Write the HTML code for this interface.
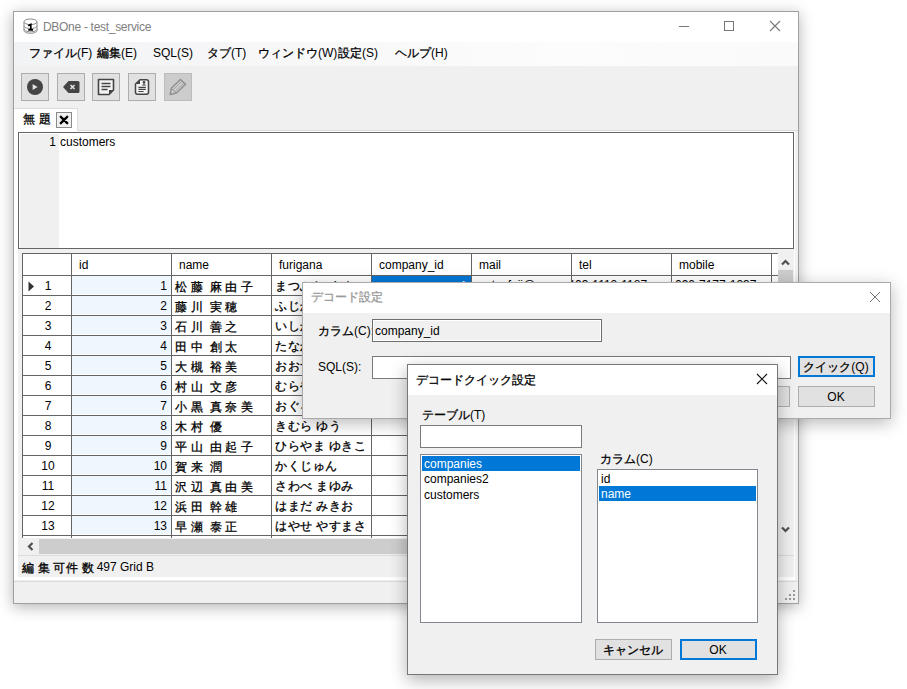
<!DOCTYPE html>
<html><head><meta charset="utf-8"><style>
*{box-sizing:border-box;margin:0;padding:0}
html,body{width:907px;height:689px;overflow:hidden;background:#fff;font-family:"Liberation Sans",sans-serif;font-size:12px;color:#000}
div,svg{position:absolute}
.t{white-space:nowrap;line-height:14px;height:14px}
.j{letter-spacing:3.5px;word-spacing:-3px;position:relative;top:1px}
.k{letter-spacing:0px}
.gl{background:#646464}
.c{-webkit-text-stroke:0.3px currentColor}
</style></head><body>
<div style="left:13px;top:11px;width:786px;height:593px;border:1px solid #a0a0a0;background:#f0f0f0;box-shadow:0 3px 14px rgba(0,0,0,.30)"></div>
<div style="left:14px;top:12px;width:784px;height:30px;background:#fff"></div>
<svg style="left:23px;top:18px" width="15" height="16" viewBox="0 0 15 16">
<g fill="none" stroke="#8a8a8a" stroke-width="1">
<path d="M1 4v8.5c0 1.6 2.9 2.8 6.5 2.8s6.5-1.2 6.5-2.8V4"/>
<ellipse cx="7.5" cy="3.8" rx="6.5" ry="2.8"/>
<path d="M1 7.8c0 1.6 2.9 2.8 6.5 2.8s6.5-1.2 6.5-2.8M1 11c0 1.6 2.9 2.8 6.5 2.8s6.5-1.2 6.5-2.8"/>
</g>
<path d="M5.2 7.8l2.6-1.4v5.4M5.3 11.8h4.8" fill="none" stroke="#000" stroke-width="1.7"/>
</svg>
<div class="t" style="left:43px;top:20px;color:#808080;font-size:12px;letter-spacing:-0.3px">DBOne - test_service</div>
<div style="left:679px;top:26px;width:10px;height:1px;background:#777"></div>
<div style="left:724px;top:21px;width:10px;height:10px;border:1px solid #777"></div>
<svg style="left:769px;top:20px" width="12" height="12"><path d="M1 1L11 11M11 1L1 11" stroke="#777" stroke-width="1.1"/></svg>
<div style="left:14px;top:42px;width:784px;height:24px;background:linear-gradient(90deg,#f2f3f5 0%,#f8f8f9 40%,#fcfcfc 70%,#fafafa 100%)"></div>
<div class="t" style="left:29px;top:46px;"><span class="c">ファイル</span>(F)</div>
<div class="t" style="left:97px;top:46px;"><span class="c">編集</span>(E)</div>
<div class="t" style="left:153px;top:46px;">SQL(S)</div>
<div class="t" style="left:207px;top:46px;"><span class="c">タブ</span>(T)</div>
<div class="t" style="left:258px;top:46px;"><span class="c">ウィンドウ</span>(W)</div>
<div class="t" style="left:338px;top:46px;"><span class="c">設定</span>(S)</div>
<div class="t" style="left:395px;top:46px;"><span class="c">ヘルプ</span>(H)</div>
<div style="left:21px;top:73px;width:28px;height:28px;border:1px solid #adadad;background:#e1e1e1"></div>
<div style="left:57px;top:73px;width:28px;height:28px;border:1px solid #adadad;background:#e1e1e1"></div>
<div style="left:92px;top:73px;width:28px;height:28px;border:1px solid #adadad;background:#e1e1e1"></div>
<div style="left:128px;top:73px;width:28px;height:28px;border:1px solid #adadad;background:#e1e1e1"></div>
<div style="left:164px;top:73px;width:28px;height:28px;border:1px solid #bcbcbc;background:#cccccc"></div>
<svg style="left:21px;top:73px" width="28" height="28"><circle cx="14" cy="14" r="8" fill="#444"/><path d="M11.6 11v6l5-3z" fill="#e1e1e1"/></svg>
<svg style="left:57px;top:73px" width="28" height="28"><path d="M6 14l5.5-6h9.5a1.5 1.5 0 0 1 1.5 1.5v9a1.5 1.5 0 0 1-1.5 1.5h-9.5z" fill="#444"/><path d="M13.5 12l4 4M17.5 12l-4 4" stroke="#e1e1e1" stroke-width="1.6"/></svg>
<svg style="left:92px;top:73px" width="28" height="28"><path d="M6.5 6.5h15v10.5l-4.5 4.5h-10.5z" fill="#f4f4f4" stroke="#444" stroke-width="1.6" stroke-linejoin="round"/><path d="M21.5 17h-4.5v4.5z" fill="#444"/><path d="M9.5 10.5h9M9.5 13.5h9M9.5 16.5h6" stroke="#444" stroke-width="1.3"/></svg>
<svg style="left:128px;top:73px" width="28" height="28"><path d="M12 6.8h6.5a2 2 0 0 1 2 2v10.5a2 2 0 0 1-2 2h-9a2 2 0 0 1-2-2v-8.3z" fill="#f4f4f4" stroke="#444" stroke-width="1.5" stroke-linejoin="round"/><path d="M7.6 11l4.4-4.2v4.2z" fill="#444"/><circle cx="16" cy="9.4" r="1.3" fill="#444"/><path d="M14 12.4c0-1.6 4-1.6 4 0z" fill="#444"/><path d="M10.4 14.4h7.4M10.4 16.4h7.4M10.4 18.5h5.2" stroke="#444" stroke-width="1.1"/></svg>
<svg style="left:164px;top:73px" width="28" height="28"><path d="M6.2 21.6l1.1-6.3 9.1-8.8 5.2 4.8-9.2 8.7z" fill="none" stroke="#909090" stroke-width="1.5" stroke-linejoin="round"/><path d="M9.6 16.4l8.4-8.2M11.4 18.2l8.6-8.1" stroke="#9a9a9a" stroke-width="0.8"/><path d="M7.3 15.3l5.1 4.7" stroke="#909090" stroke-width="1"/></svg>
<div style="left:14px;top:130px;width:784px;height:1px;background:#dadada"></div>
<div style="left:14px;top:131px;width:781px;height:449px;background:#fff"></div>
<div style="left:18px;top:249px;width:776px;height:328px;background:#f0f0f0"></div>
<div style="left:14px;top:581px;width:784px;height:1px;background:#dadada"></div>
<div style="left:14px;top:108px;width:64px;height:23px;background:#fff;border-top:1px solid #dcdcdc;border-right:1px solid #dcdcdc"></div>
<div class="t" style="left:23px;top:111px;"><span class="j"><span class="c">無題</span></span></div>
<div style="left:56px;top:112px;width:16px;height:16px;border:1px solid #8a8a8a;background:#f0f0f0"></div>
<svg style="left:56px;top:112px" width="16" height="16"><path d="M4.8 4.8l6.4 6.4M11.2 4.8l-6.4 6.4" stroke="#000" stroke-width="2.4" stroke-linecap="round"/></svg>
<div style="left:18px;top:132px;width:776px;height:117px;border:1px solid #646464;background:#fff"></div>
<div style="left:20px;top:134px;width:39px;height:114px;background:#f0f0f0"></div>
<div class="t" style="left:-144px;width:200px;text-align:right;top:135px;">1</div>
<div class="t" style="left:60px;top:135px;">customers</div>
<div style="left:22px;top:253px;width:756px;height:285px;background:#fff"></div>
<div style="left:72px;top:276px;width:99px;height:18px;background:#eef6fe"></div>
<div style="left:72px;top:296px;width:99px;height:18px;background:#eef6fe"></div>
<div style="left:72px;top:316px;width:99px;height:18px;background:#eef6fe"></div>
<div style="left:72px;top:336px;width:99px;height:18px;background:#eef6fe"></div>
<div style="left:72px;top:356px;width:99px;height:18px;background:#eef6fe"></div>
<div style="left:72px;top:376px;width:99px;height:18px;background:#eef6fe"></div>
<div style="left:72px;top:396px;width:99px;height:18px;background:#eef6fe"></div>
<div style="left:72px;top:416px;width:99px;height:18px;background:#eef6fe"></div>
<div style="left:72px;top:436px;width:99px;height:18px;background:#eef6fe"></div>
<div style="left:72px;top:456px;width:99px;height:18px;background:#eef6fe"></div>
<div style="left:72px;top:476px;width:99px;height:18px;background:#eef6fe"></div>
<div style="left:72px;top:496px;width:99px;height:18px;background:#eef6fe"></div>
<div style="left:72px;top:516px;width:99px;height:18px;background:#eef6fe"></div>
<div style="left:372px;top:276px;width:99px;height:19px;background:#0078d7"></div>
<div style="left:22px;top:253px;width:1px;height:285px;background:#646464"></div>
<div style="left:71px;top:253px;width:1px;height:285px;background:#646464"></div>
<div style="left:171px;top:253px;width:1px;height:285px;background:#646464"></div>
<div style="left:271px;top:253px;width:1px;height:285px;background:#646464"></div>
<div style="left:371px;top:253px;width:1px;height:285px;background:#646464"></div>
<div style="left:471px;top:253px;width:1px;height:285px;background:#646464"></div>
<div style="left:571px;top:253px;width:1px;height:285px;background:#646464"></div>
<div style="left:671px;top:253px;width:1px;height:285px;background:#646464"></div>
<div style="left:771px;top:253px;width:1px;height:285px;background:#646464"></div>
<div style="left:22px;top:253px;width:756px;height:1px;background:#646464"></div>
<div style="left:22px;top:275px;width:756px;height:1px;background:#646464"></div>
<div style="left:22px;top:295px;width:756px;height:1px;background:#646464"></div>
<div style="left:22px;top:315px;width:756px;height:1px;background:#646464"></div>
<div style="left:22px;top:335px;width:756px;height:1px;background:#646464"></div>
<div style="left:22px;top:355px;width:756px;height:1px;background:#646464"></div>
<div style="left:22px;top:375px;width:756px;height:1px;background:#646464"></div>
<div style="left:22px;top:395px;width:756px;height:1px;background:#646464"></div>
<div style="left:22px;top:415px;width:756px;height:1px;background:#646464"></div>
<div style="left:22px;top:435px;width:756px;height:1px;background:#646464"></div>
<div style="left:22px;top:455px;width:756px;height:1px;background:#646464"></div>
<div style="left:22px;top:475px;width:756px;height:1px;background:#646464"></div>
<div style="left:22px;top:495px;width:756px;height:1px;background:#646464"></div>
<div style="left:22px;top:515px;width:756px;height:1px;background:#646464"></div>
<div style="left:22px;top:535px;width:756px;height:1px;background:#646464"></div>
<div class="t" style="left:79px;top:258px;">id</div>
<div class="t" style="left:179px;top:258px;">name</div>
<div class="t" style="left:279px;top:258px;">furigana</div>
<div class="t" style="left:379px;top:258px;">company_id</div>
<div class="t" style="left:479px;top:258px;">mail</div>
<div class="t" style="left:579px;top:258px;">tel</div>
<div class="t" style="left:679px;top:258px;">mobile</div>
<div class="t" style="left:-52px;width:200px;text-align:center;top:279px;">1</div>
<div class="t" style="left:-33px;width:200px;text-align:right;top:279px;">1</div>
<div class="t" style="left:175px;top:279px;"><span class="j"><span class="c">松藤</span> <span class="c">麻由子</span></span></div>
<div class="t" style="left:275px;top:279px;letter-spacing:0.5px"><span class="c">まつふじ</span> <span class="c">まゆこ</span></div>
<div class="t" style="left:-52px;width:200px;text-align:center;top:299px;">2</div>
<div class="t" style="left:-33px;width:200px;text-align:right;top:299px;">2</div>
<div class="t" style="left:175px;top:299px;"><span class="j"><span class="c">藤川</span> <span class="c">実穂</span></span></div>
<div class="t" style="left:275px;top:299px;letter-spacing:0.5px"><span class="c">ふじかわ</span> <span class="c">みほ</span></div>
<div class="t" style="left:-52px;width:200px;text-align:center;top:319px;">3</div>
<div class="t" style="left:-33px;width:200px;text-align:right;top:319px;">3</div>
<div class="t" style="left:175px;top:319px;"><span class="j"><span class="c">石川</span> <span class="c">善之</span></span></div>
<div class="t" style="left:275px;top:319px;letter-spacing:0.5px"><span class="c">いしかわ</span> <span class="c">よしゆき</span></div>
<div class="t" style="left:-52px;width:200px;text-align:center;top:339px;">4</div>
<div class="t" style="left:-33px;width:200px;text-align:right;top:339px;">4</div>
<div class="t" style="left:175px;top:339px;"><span class="j"><span class="c">田中</span> <span class="c">創太</span></span></div>
<div class="t" style="left:275px;top:339px;letter-spacing:0.5px"><span class="c">たなか</span> <span class="c">そうた</span></div>
<div class="t" style="left:-52px;width:200px;text-align:center;top:359px;">5</div>
<div class="t" style="left:-33px;width:200px;text-align:right;top:359px;">5</div>
<div class="t" style="left:175px;top:359px;"><span class="j"><span class="c">大槻</span> <span class="c">裕美</span></span></div>
<div class="t" style="left:275px;top:359px;letter-spacing:0.5px"><span class="c">おおつき</span> <span class="c">ひろみ</span></div>
<div class="t" style="left:-52px;width:200px;text-align:center;top:379px;">6</div>
<div class="t" style="left:-33px;width:200px;text-align:right;top:379px;">6</div>
<div class="t" style="left:175px;top:379px;"><span class="j"><span class="c">村山</span> <span class="c">文彦</span></span></div>
<div class="t" style="left:275px;top:379px;letter-spacing:0.5px"><span class="c">むらやま</span> <span class="c">ふみひこ</span></div>
<div class="t" style="left:-52px;width:200px;text-align:center;top:399px;">7</div>
<div class="t" style="left:-33px;width:200px;text-align:right;top:399px;">7</div>
<div class="t" style="left:175px;top:399px;"><span class="j"><span class="c">小黒</span> <span class="c">真奈美</span></span></div>
<div class="t" style="left:275px;top:399px;letter-spacing:0.5px"><span class="c">おぐろ</span> <span class="c">まなみ</span></div>
<div class="t" style="left:-52px;width:200px;text-align:center;top:419px;">8</div>
<div class="t" style="left:-33px;width:200px;text-align:right;top:419px;">8</div>
<div class="t" style="left:175px;top:419px;"><span class="j"><span class="c">木村</span> <span class="c">優</span></span></div>
<div class="t" style="left:275px;top:419px;letter-spacing:0.5px"><span class="c">きむら</span> <span class="c">ゆう</span></div>
<div class="t" style="left:-52px;width:200px;text-align:center;top:439px;">9</div>
<div class="t" style="left:-33px;width:200px;text-align:right;top:439px;">9</div>
<div class="t" style="left:175px;top:439px;"><span class="j"><span class="c">平山</span> <span class="c">由起子</span></span></div>
<div class="t" style="left:275px;top:439px;letter-spacing:0.5px"><span class="c">ひらやま</span> <span class="c">ゆきこ</span></div>
<div class="t" style="left:-52px;width:200px;text-align:center;top:459px;">10</div>
<div class="t" style="left:-33px;width:200px;text-align:right;top:459px;">10</div>
<div class="t" style="left:175px;top:459px;"><span class="j"><span class="c">賀来</span> <span class="c">潤</span></span></div>
<div class="t" style="left:275px;top:459px;letter-spacing:0.5px"><span class="c">かくじゅん</span></div>
<div class="t" style="left:-52px;width:200px;text-align:center;top:479px;">11</div>
<div class="t" style="left:-33px;width:200px;text-align:right;top:479px;">11</div>
<div class="t" style="left:175px;top:479px;"><span class="j"><span class="c">沢辺</span> <span class="c">真由美</span></span></div>
<div class="t" style="left:275px;top:479px;letter-spacing:0.5px"><span class="c">さわべ</span> <span class="c">まゆみ</span></div>
<div class="t" style="left:-52px;width:200px;text-align:center;top:499px;">12</div>
<div class="t" style="left:-33px;width:200px;text-align:right;top:499px;">12</div>
<div class="t" style="left:175px;top:499px;"><span class="j"><span class="c">浜田</span> <span class="c">幹雄</span></span></div>
<div class="t" style="left:275px;top:499px;letter-spacing:0.5px"><span class="c">はまだ</span> <span class="c">みきお</span></div>
<div class="t" style="left:-52px;width:200px;text-align:center;top:519px;">13</div>
<div class="t" style="left:-33px;width:200px;text-align:right;top:519px;">13</div>
<div class="t" style="left:175px;top:519px;"><span class="j"><span class="c">早瀬</span> <span class="c">泰正</span></span></div>
<div class="t" style="left:275px;top:519px;letter-spacing:0.5px"><span class="c">はやせ</span> <span class="c">やすまさ</span></div>
<div class="t" style="left:267px;width:200px;text-align:right;top:279px;color:#fff">1</div>
<div class="t" style="left:475px;top:278px;">matsufuji@example.jp</div>
<div class="t" style="left:575px;top:278px;">03-1112-1187</div>
<div class="t" style="left:675px;top:278px;">090-7177-1237</div>
<svg style="left:28px;top:281px" width="8" height="11"><path d="M0.5 0.5v10l5.5-5z" fill="#333"/></svg>
<div style="left:778px;top:253px;width:15px;height:285px;background:#f0f0f0"></div>
<svg style="left:779px;top:257px" width="13" height="10"><path d="M3 7.5l3.5-3.5 3.5 3.5" fill="none" stroke="#505050" stroke-width="2.2"/></svg>
<div style="left:778px;top:270px;width:15px;height:18px;background:#cdcdcd"></div>
<svg style="left:779px;top:525px" width="13" height="10"><path d="M3 2.5l3.5 3.5 3.5-3.5" fill="none" stroke="#505050" stroke-width="2.2"/></svg>
<div style="left:18px;top:538px;width:760px;height:17px;background:#f0f0f0"></div>
<svg style="left:25px;top:540px" width="10" height="13"><path d="M7.5 3l-3.5 3.5 3.5 3.5" fill="none" stroke="#505050" stroke-width="2.2"/></svg>
<div style="left:39px;top:539px;width:720px;height:15px;background:#cdcdcd"></div>
<div style="left:18px;top:555px;width:776px;height:1px;background:#dcdcdc"></div>
<div class="t" style="left:22px;top:560px;"><span class="j"><span class="c">編集可</span></span></div>
<div class="t" style="left:66px;top:560px;"><span class="j"><span class="c">件数</span></span></div>
<div class="t" style="left:90px;top:560px;">: 497</div>
<div class="t" style="left:120px;top:560px;">Grid B</div>
<svg style="left:784px;top:589px" width="12" height="12"><g fill="#9a9a9a"><rect x="9" y="1" width="2" height="2"/><rect x="5" y="5" width="2" height="2"/><rect x="9" y="5" width="2" height="2"/><rect x="1" y="9" width="2" height="2"/><rect x="5" y="9" width="2" height="2"/><rect x="9" y="9" width="2" height="2"/></g></svg>
<div style="left:302px;top:282px;width:589px;height:137px;border:1px solid #aaaaaa;background:#f0f0f0;box-shadow:0 4px 16px rgba(0,0,0,.28)"></div>
<div style="left:303px;top:283px;width:587px;height:30px;background:#fff"></div>
<div class="t" style="left:311px;top:290px;color:#999"><span class="c">デコード設定</span></div>
<svg style="left:869px;top:291px" width="12" height="12"><path d="M1 1L11 11M11 1L1 11" stroke="#777" stroke-width="1"/></svg>
<div class="t" style="left:318px;top:324px;"><span class="c">カラム</span>(C):</div>
<div style="left:372px;top:319px;width:230px;height:23px;border:1px solid #6e6e6e;background:#f0f0f0;box-shadow:inset 0 0 0 1px #fff"></div>
<div class="t" style="left:375px;top:324px;">company_id</div>
<div class="t" style="left:318px;top:360px;">SQL(S):</div>
<div style="left:372px;top:356px;width:419px;height:23px;border:1px solid #7a7a7a;background:#fff"></div>
<div style="left:798px;top:356px;width:77px;height:21px;border:2px solid #0078d7;background:#e1e1e1"></div>
<div class="t" style="left:736px;width:200px;text-align:center;top:360px;"><span class="c">クイック</span>(Q)</div>
<div style="left:713px;top:386px;width:77px;height:21px;border:1px solid #adadad;background:#e1e1e1"></div>
<div style="left:798px;top:386px;width:77px;height:21px;border:1px solid #adadad;background:#e1e1e1"></div>
<div class="t" style="left:736px;width:200px;text-align:center;top:390px;">OK</div>
<div style="left:407px;top:364px;width:371px;height:311px;border:1px solid #777;background:#f0f0f0;box-shadow:0 5px 16px rgba(0,0,0,.30)"></div>
<div style="left:408px;top:365px;width:369px;height:30px;background:#fff"></div>
<div class="t" style="left:416px;top:373px;"><span class="c">デコードクイック設定</span></div>
<svg style="left:756px;top:373px" width="12" height="12"><path d="M1 1L11 11M11 1L1 11" stroke="#111" stroke-width="1.1"/></svg>
<div class="t" style="left:422px;top:408px;"><span class="c">テーブル</span>(T)</div>
<div style="left:420px;top:425px;width:162px;height:23px;border:1px solid #7a7a7a;background:#fff"></div>
<div style="left:420px;top:454px;width:162px;height:169px;border:1px solid #828790;background:#fff"></div>
<div style="left:422px;top:456px;width:158px;height:15px;background:#0078d7"></div>
<div class="t" style="left:424px;top:457px;color:#fff">companies</div>
<div class="t" style="left:424px;top:472px;">companies2</div>
<div class="t" style="left:424px;top:488px;">customers</div>
<div class="t" style="left:600px;top:452px;"><span class="c">カラム</span>(C)</div>
<div style="left:597px;top:469px;width:161px;height:154px;border:1px solid #828790;background:#fff"></div>
<div style="left:599px;top:486px;width:157px;height:15px;background:#0078d7"></div>
<div class="t" style="left:601px;top:472px;">id</div>
<div class="t" style="left:601px;top:487px;color:#fff">name</div>
<div style="left:595px;top:639px;width:77px;height:21px;border:1px solid #adadad;background:#e1e1e1"></div>
<div class="t" style="left:533px;width:200px;text-align:center;top:643px;"><span class="c">キャンセル</span></div>
<div style="left:680px;top:639px;width:77px;height:21px;border:2px solid #0078d7;background:#e1e1e1"></div>
<div class="t" style="left:618px;width:200px;text-align:center;top:643px;">OK</div>
</body></html>
